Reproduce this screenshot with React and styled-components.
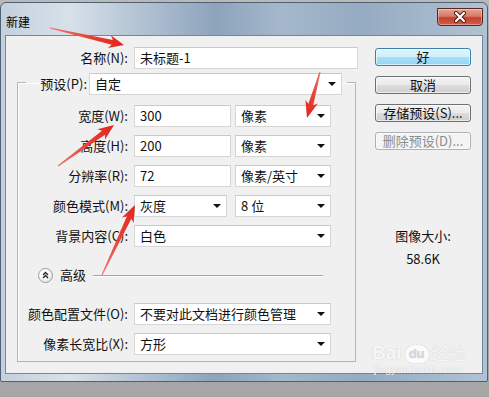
import React from "react";
import styled, { createGlobalStyle } from "styled-components";

const GlobalStyle = createGlobalStyle`
  html, body { margin: 0; padding: 0; }
  body {
    background: #a8a8a8;
    font-family: "Noto Sans CJK SC", "Liberation Sans", sans-serif;
    font-size: 13px;
    color: #111;
  }
`;

const Page = styled.div`
  position: relative;
  width: 489px;
  height: 397px;
  overflow: hidden;
  padding-top: 2px;
  box-sizing: border-box;
  background: linear-gradient(#b9b9b9, #a8a8a8 10%, #a6a6a6);
`;

const Window = styled.div`
  width: 488px;
  height: 380px;
  box-sizing: border-box;
  border: 1px solid #4f6275;
  border-radius: 6px 6px 2px 2px;
  display: flex;
  flex-direction: column;
  background: linear-gradient(
    90deg,
    #c3d0dd 0%,
    #d8e1ea 14%,
    #b9c8d7 26%,
    #8da4bc 44%,
    #a5b8cb 58%,
    #95abc1 74%,
    #b1c2d3 100%
  );
`;

const TitleBar = styled.div`
  height: 32px;
  display: flex;
  align-items: flex-start;
  flex: none;
`;

const Title = styled.div`
  margin: 11px 0 0 5px;
  font-size: 12px;
  line-height: 16px;
  color: #000;
`;

const CloseButton = styled.div`
  margin: 5px 4px 0 auto;
  width: 46px;
  height: 18px;
  box-sizing: border-box;
  border: 1px solid #5b261e;
  border-radius: 0 0 4px 4px;
  background: linear-gradient(#e8a393 0%, #d77a68 45%, #c2402d 55%, #d0604a 100%);
  box-shadow: inset 0 0 0 1px rgba(255, 255, 255, 0.35);
  display: flex;
  align-items: center;
  justify-content: center;
`;

const Client = styled.div`
  margin-left: 4px;
  width: 478px;
  height: 339px;
  box-sizing: border-box;
  border: 1px solid #74879a;
  background: #f0f0f0;
  display: flex;
  flex: none;
`;

const FormCol = styled.div`
  margin-left: 11px;
  width: 341px;
  padding-top: 11px;
  flex: none;
`;

const Row = styled.div`
  display: flex;
  align-items: center;
  height: 22px;
`;

const Label = styled.span`
  width: ${(p) => p.$w}px;
  padding-right: ${(p) => (p.$gap === undefined ? 6 : p.$gap)}px;
  box-sizing: border-box;
  text-align: right;
  white-space: nowrap;
  line-height: 16px;
  flex: none;
`;

const Field = styled.div`
  width: ${(p) => p.$w}px;
  height: 22px;
  margin-left: ${(p) => p.$ml || 0}px;
  box-sizing: border-box;
  border: 1px solid #d6d6d6;
  border-top-color: #c9c9c9;
  background: #fff;
  display: flex;
  align-items: center;
  justify-content: space-between;
  padding: 0 5px 0 5px;
  line-height: 16px;
  white-space: nowrap;
  overflow: hidden;
  flex: none;
`;

const Caret = styled.span`
  width: 0;
  height: 0;
  border-left: 4px solid transparent;
  border-right: 4px solid transparent;
  border-top: 4px solid #111;
  flex: none;
`;

const Group = styled.fieldset`
  margin: 0;
  padding: 0 0 6px 0;
  width: 339px;
  box-sizing: border-box;
  border: 1px solid #b5b5b5;
  box-shadow: inset 1px 1px 0 #fff;
`;

const Legend = styled.legend`
  margin-left: 8px;
  padding: 4px 5px 0 0;
  display: flex;
  align-items: center;
`;

const Rows = styled.div`
  display: flex;
  flex-direction: column;
  gap: 8px;
  margin-top: ${(p) => p.$mt}px;
`;

const Advanced = styled.div`
  margin-top: 20px;
  height: 16px;
  padding-left: 20px;
  display: flex;
  align-items: center;
`;

const RoundButton = styled.span`
  width: 15px;
  height: 15px;
  box-sizing: border-box;
  border-radius: 50%;
  border: 1px solid #9c9c9c;
  background: radial-gradient(circle at 40% 35%, #ffffff 30%, #d8d8d8 100%);
  display: flex;
  align-items: center;
  justify-content: center;
  flex: none;
`;

const AdvancedText = styled.span`
  margin-left: 7px;
  line-height: 16px;
`;

const Divider = styled.span`
  margin-left: 7px;
  width: 230px;
  height: 1px;
  background: #a4a4a4;
  box-shadow: 0 1px 0 #fff;
`;

const ButtonCol = styled.div`
  margin-left: 17px;
  width: 96px;
  padding-top: 12px;
  display: flex;
  flex-direction: column;
  gap: 10px;
  flex: none;
`;

const Button = styled.div`
  height: 18px;
  box-sizing: border-box;
  border-radius: 3px;
  border: 1px solid ${(p) => (p.$primary ? "#3c7fb1" : p.$disabled ? "#adb2b5" : "#707070")};
  background: ${(p) =>
    p.$primary
      ? "linear-gradient(#e3f6fe 0%, #cdeefd 50%, #a9e0fa 50%, #94d4f3 100%)"
      : p.$disabled
      ? "#f4f4f4"
      : "linear-gradient(#f2f2f2 0%, #ebebeb 50%, #dddddd 50%, #cfcfcf 100%)"};
  color: ${(p) => (p.$disabled ? "#8c8c8c" : "#111")};
  text-align: center;
  line-height: 16px;
  box-shadow: inset 0 0 0 1px rgba(255, 255, 255, 0.6);
`;

const Info = styled.div`
  margin-top: 67px;
  text-align: center;
  line-height: 18px;
  display: flex;
  flex-direction: column;
  gap: 5px;
`;

const Overlay = styled.svg`
  position: absolute;
  left: 0;
  top: 0;
  pointer-events: none;
`;

const Watermark = styled.div`
  position: absolute;
  left: 372px;
  top: 343px;
  color: rgba(255, 255, 255, 0.9);
  text-shadow: 0 0 1px rgba(140, 145, 155, 0.55);
  pointer-events: none;
`;

const MarkTop = styled.div`
  display: flex;
  align-items: flex-end;
  font-family: "Liberation Sans", sans-serif;
  font-weight: bold;
  font-size: 19px;
  line-height: 20px;
`;

const Paw = styled.span`
  margin: 0 3px;
  width: 24px;
  height: 18px;
  border-radius: 10px 10px 8px 8px;
  background: rgba(255, 255, 255, 0.75);
  box-shadow: 0 0 1px rgba(140, 145, 155, 0.6);
  color: rgba(215, 218, 224, 1);
  font-size: 13px;
  line-height: 18px;
  text-align: center;
`;

const MarkCn = styled.span`
  font-family: "Noto Sans CJK SC", sans-serif;
  font-size: 17px;
  font-weight: normal;
`;

const MarkUrl = styled.div`
  font-family: "Liberation Sans", sans-serif;
  font-size: 11px;
  line-height: 13px;
  padding-left: 2px;
`;

function arrowPoints(tail, tip, headLen, headW, neckW) {
  const [tx, ty] = tail;
  const [hx, hy] = tip;
  const L = Math.hypot(hx - tx, hy - ty);
  const ux = (hx - tx) / L;
  const uy = (hy - ty) / L;
  const nx = -uy;
  const ny = ux;
  const bx = hx - ux * headLen;
  const by = hy - uy * headLen;
  const bbx = bx + ux * 3;
  const bby = by + uy * 3;
  const p = (x, y, w) => `${(x + nx * w).toFixed(1)},${(y + ny * w).toFixed(1)}`;
  return [
    p(tx, ty, 0.6),
    p(bbx, bby, neckW / 2),
    p(bx, by, headW / 2),
    `${hx},${hy}`,
    p(bx, by, -headW / 2),
    p(bbx, bby, -neckW / 2),
    p(tx, ty, -0.6),
  ].join(" ");
}

const arrows = [
  { tail: [50, 28], tip: [124, 45], len: 15, w: 13, neck: 5 },
  { tail: [320, 72], tip: [307, 118], len: 17, w: 13, neck: 5 },
  { tail: [58, 166], tip: [114, 125], len: 16, w: 13, neck: 5 },
  { tail: [102, 275], tip: [135, 205], len: 17, w: 13, neck: 5 },
];

function Combo({ w, ml, children }) {
  return (
    <Field $w={w} $ml={ml}>
      <span>{children}</span>
      <Caret />
    </Field>
  );
}

export default function App() {
  return (
    <Page>
      <GlobalStyle />
      <Window>
        <TitleBar>
          <Title>新建</Title>
          <CloseButton>
            <svg width="14" height="12" viewBox="0 0 14 12">
              <path d="M3 2 L11 10 M11 2 L3 10" stroke="#4a1a14" strokeWidth="4" strokeLinecap="round" />
              <path d="M3 2 L11 10 M11 2 L3 10" stroke="#fff" strokeWidth="2.2" strokeLinecap="round" />
            </svg>
          </CloseButton>
        </TitleBar>
        <Client>
          <FormCol>
            <Row>
              <Label $w={117}>名称(N):</Label>
              <Field $w={224}>未标题-1</Field>
            </Row>
            <Group>
              <Legend>
                <Label $w={63} $gap={2}>预设(P):</Label>
                <Combo w={253}>自定</Combo>
              </Legend>
              <Rows $mt={10}>
                <Row>
                  <Label $w={116}>宽度(W):</Label>
                  <Field $w={97}>300</Field>
                  <Combo w={96} ml={4}>像素</Combo>
                </Row>
                <Row>
                  <Label $w={116}>高度(H):</Label>
                  <Field $w={97}>200</Field>
                  <Combo w={96} ml={4}>像素</Combo>
                </Row>
                <Row>
                  <Label $w={116}>分辨率(R):</Label>
                  <Field $w={97}>72</Field>
                  <Combo w={96} ml={4}>像素/英寸</Combo>
                </Row>
                <Row>
                  <Label $w={116}>颜色模式(M):</Label>
                  <Combo w={93}>灰度</Combo>
                  <Combo w={96} ml={8}>8 位</Combo>
                </Row>
                <Row>
                  <Label $w={116}>背景内容(C):</Label>
                  <Combo w={197}>白色</Combo>
                </Row>
              </Rows>
              <Advanced>
                <RoundButton>
                  <svg width="7" height="8" viewBox="0 0 7 8">
                    <path d="M1 4 L3.5 1.5 L6 4 M1 7 L3.5 4.5 L6 7" stroke="#222" strokeWidth="1.3" fill="none" />
                  </svg>
                </RoundButton>
                <AdvancedText>高级</AdvancedText>
                <Divider />
              </Advanced>
              <Rows $mt={20}>
                <Row>
                  <Label $w={116}>颜色配置文件(O):</Label>
                  <Combo w={197}>不要对此文档进行颜色管理</Combo>
                </Row>
                <Row>
                  <Label $w={116}>像素长宽比(X):</Label>
                  <Combo w={197}>方形</Combo>
                </Row>
              </Rows>
            </Group>
          </FormCol>
          <ButtonCol>
            <Button $primary>好</Button>
            <Button>取消</Button>
            <Button>存储预设(S)...</Button>
            <Button $disabled>删除预设(D)...</Button>
            <Info>
              <span>图像大小:</span>
              <span>58.6K</span>
            </Info>
          </ButtonCol>
        </Client>
      </Window>
      <Watermark>
        <MarkTop>
          <span>Bai</span>
          <Paw>du</Paw>
          <MarkCn>经验</MarkCn>
        </MarkTop>
        <MarkUrl>jingyan.baidu.com</MarkUrl>
      </Watermark>
      <Overlay width="489" height="397" viewBox="0 0 489 397">
        <defs>
          {arrows.map((a, i) => (
            <linearGradient
              key={i}
              id={`ag${i}`}
              gradientUnits="userSpaceOnUse"
              x1={a.tail[0]}
              y1={a.tail[1]}
              x2={a.tip[0]}
              y2={a.tip[1]}
            >
              <stop offset="0" stopColor="#f07a70" />
              <stop offset="0.5" stopColor="#e8433a" />
              <stop offset="1" stopColor="#e0261f" />
            </linearGradient>
          ))}
        </defs>
        {arrows.map((a, i) => (
          <polygon key={i} points={arrowPoints(a.tail, a.tip, a.len, a.w, a.neck)} fill={`url(#ag${i})`} />
        ))}
      </Overlay>
    </Page>
  );
}
